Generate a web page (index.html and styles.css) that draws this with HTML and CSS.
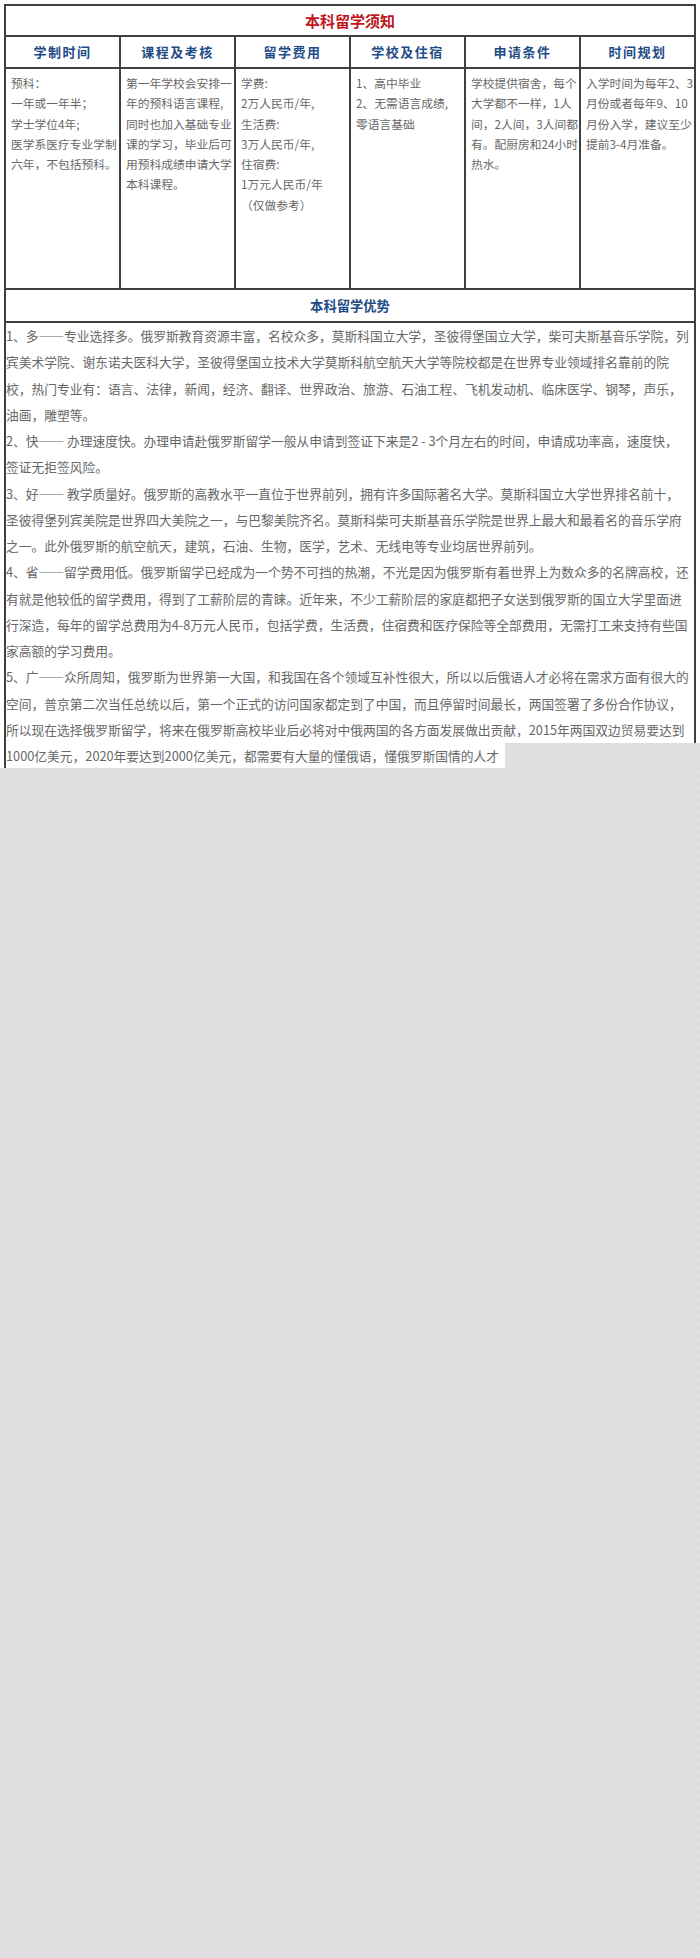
FILE: index.html
```html
<!DOCTYPE html>
<html lang="zh-CN">
<head>
<meta charset="utf-8">
<title>本科留学须知</title>
<link rel="stylesheet" href="styles.css">
</head>
<body>
<div class="sheet">
  <table class="info">
    <colgroup>
      <col class="c1"><col class="c2"><col class="c3"><col class="c4"><col class="c5"><col class="c6">
    </colgroup>
    <tr>
      <td class="title" colspan="6">本科留学须知</td>
    </tr>
    <tr class="head-row">
      <td class="head">学制时间</td>
      <td class="head">课程及考核</td>
      <td class="head">留学费用</td>
      <td class="head">学校及住宿</td>
      <td class="head">申请条件</td>
      <td class="head">时间规划</td>
    </tr>
    <tr class="body-row">
      <td class="cell">预科：<br>一年或一年半；<br>学士学位4年;<br>医学系医疗专业学制<br>六年，不包括预科。</td>
      <td class="cell">第一年学校会安排一<br>年的预科语言课程,<br>同时也加入基础专业<br>课的学习，毕业后可<br>用预科成绩申请大学<br>本科课程。</td>
      <td class="cell">学费:<br>2万人民币/年,<br>生活费:<br>3万人民币/年,<br>住宿费:<br>1万元人民币/年<br>（仅做参考）</td>
      <td class="cell">1、高中毕业<br>2、无需语言成绩,<br>零语言基础</td>
      <td class="cell">学校提供宿舍，每个<br>大学都不一样，1人<br>间，2人间，3人间都<br>有。配厨房和24小时<br>热水。</td>
      <td class="cell">入学时间为每年2、3<br>月份或者每年9、10<br>月份入学，建议至少<br>提前3-4月准备。</td>
    </tr>
    <tr>
      <td class="subtitle" colspan="6">本科留学优势</td>
    </tr>
    <tr>
      <td class="text" colspan="6">
        <p class="item">1、多——专业选择多。俄罗斯教育资源丰富，名校众多，莫斯科国立大学，圣彼得堡国立大学，柴可夫斯基音乐学院，列<br>宾美术学院、谢东诺夫医科大学，圣彼得堡国立技术大学莫斯科航空航天大学等院校都是在世界专业领域排名靠前的院<br>校，热门专业有：语言、法律，新闻，经济、翻译、世界政治、旅游、石油工程、飞机发动机、临床医学、钢琴，声乐，<br>油画，雕塑等。</p>
        <p class="item">2、快—— 办理速度快。办理申请赴俄罗斯留学一般从申请到签证下来是2 - 3个月左右的时间，申请成功率高，速度快，<br>签证无拒签风险。</p>
        <p class="item">3、好—— 教学质量好。俄罗斯的高教水平一直位于世界前列，拥有许多国际著名大学。莫斯科国立大学世界排名前十，<br>圣彼得堡列宾美院是世界四大美院之一，与巴黎美院齐名。莫斯科柴可夫斯基音乐学院是世界上最大和最着名的音乐学府<br>之一。此外俄罗斯的航空航天，建筑，石油、生物，医学，艺术、无线电等专业均居世界前列。</p>
        <p class="item">4、省——留学费用低。俄罗斯留学已经成为一个势不可挡的热潮，不光是因为俄罗斯有着世界上为数众多的名牌高校，还<br>有就是他较低的留学费用，得到了工薪阶层的青睐。近年来，不少工薪阶层的家庭都把子女送到俄罗斯的国立大学里面进<br>行深造，每年的留学总费用为4-8万元人民币，包括学费，生活费，住宿费和医疗保险等全部费用，无需打工来支持有些国<br>家高额的学习费用。</p>
        <p class="item">5、广——众所周知，俄罗斯为世界第一大国，和我国在各个领域互补性很大，所以以后俄语人才必将在需求方面有很大的<br>空间，普京第二次当任总统以后，第一个正式的访问国家都定到了中国，而且停留时间最长，两国签署了多份合作协议，<br>所以现在选择俄罗斯留学，将来在俄罗斯高校毕业后必将对中俄两国的各方面发展做出贡献，2015年两国双边贸易要达到<br>1000亿美元，2020年要达到2000亿美元，都需要有大量的懂俄语，懂俄罗斯国情的人才</p>
      </td>
    </tr>
  </table>
  <div class="loading-mask"></div>
</div>
</body>
</html>
```

FILE: styles.css
```css
html, body {
  margin: 0;
  padding: 0;
}

body {
  min-height: 1958px;
  background-color: #dfdfdf;
  background-image: radial-gradient(circle, #e6e6e6 0.8px, transparent 1.2px);
  background-size: 8px 8px;
  font-family: "Noto Sans CJK SC", "Microsoft YaHei", sans-serif;
}

.sheet {
  position: relative;
  width: 700px;
  height: 768px;
  background: #ffffff;
  overflow: hidden;
}

.info {
  margin: 4px;
  width: 692px;
  border-collapse: collapse;
  table-layout: fixed;
}

.info td {
  border: 2px solid #404040;
  padding: 0;
}

.title {
  height: 29px;
  color: #bf1520;
  font-size: 15px;
  font-weight: 700;
  text-align: center;
  line-height: 29px;
}

.head {
  height: 30px;
  color: #1f4c87;
  font-size: 13px;
  font-weight: 700;
  letter-spacing: 1.5px;
  text-align: center;
  line-height: 30px;
}

.body-row .cell {
  height: 215px;
  vertical-align: top;
  padding: 4px 0 0 5px;
  color: #686868;
  font-size: 11.75px;
  line-height: 20.3px;
  white-space: nowrap;
  overflow: hidden;
}

.subtitle {
  height: 31px;
  color: #1f4c87;
  font-size: 13.3px;
  font-weight: 700;
  text-align: center;
  line-height: 31px;
}

.text {
  vertical-align: top;
  padding: 4px 0 0 1px;
  color: #686868;
  font-size: 12.75px;
  line-height: 26.25px;
  white-space: nowrap;
}

.item {
  margin: 0;
}

.loading-mask {
  position: absolute;
  left: 505px;
  top: 743px;
  right: 0;
  bottom: 0;
  background-color: #dfdfdf;
  background-image: radial-gradient(circle, #e6e6e6 0.8px, transparent 1.2px);
  background-size: 8px 8px;
}
```
